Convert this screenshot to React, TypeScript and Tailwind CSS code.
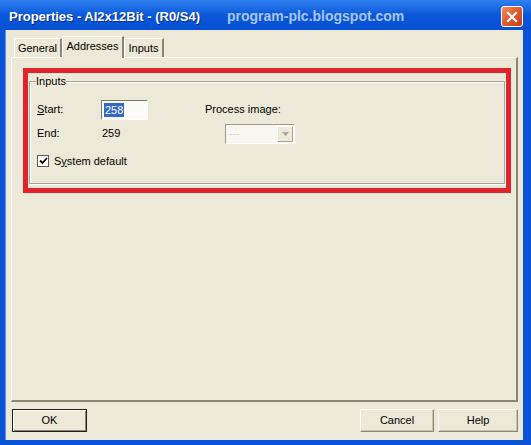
import React from 'react';

const ui = "font-['Liberation_Sans',Arial,sans-serif] text-[11px] text-black";

const Tab: React.FC<{ label: string; active?: boolean; w: string }> = ({ label, active, w }) => (
  <div
    className={
      active
        ? `${w} h-[22px] -mb-[1px] relative z-10 bg-[#ECE9D8] border-l border-t border-white border-r-2 border-r-[#8A8778] flex items-center justify-center pb-[3px]`
        : `${w} h-[19px] bg-[#ECE9D8] border-l border-t border-white border-r-2 border-r-[#8A8778] flex items-center justify-center pt-[1px]`
    }
  >
    {label}
  </div>
);

const Button: React.FC<{ label: string; def?: boolean; className?: string }> = ({ label, def, className }) => (
  <div
    className={`${className ?? ''} h-[23px] flex items-center justify-center ${
      def
        ? 'border border-[#1f1f1f] shadow-[inset_1px_1px_0_#fff,inset_-1px_-1px_0_#8A8778]'
        : 'border border-t-white border-l-white border-r-[#8A8778] border-b-[#8A8778] shadow-[inset_-1px_-1px_0_#C9C6B6]'
    } bg-[#ECE9D8]`}
  >
    {label}
  </div>
);

export default function App() {
  return (
    <div className={`${ui} w-[531px] h-[445px] flex flex-col bg-[#0A52D6]`}>
      {/* title bar */}
      <div className="h-[30px] flex items-center pl-[9px] pr-[8px] pt-[3px] bg-gradient-to-b from-[#2F80F0] via-[#0A58DA] to-[#0550D2]">
        <span className="text-[13px] font-bold text-white [text-shadow:1px_1px_0_#0a2f8a]">Properties - AI2x12Bit - (R0/S4)</span>
        <span className="ml-[27px] text-[14px] font-bold text-[#A9C6F2]">program-plc.blogspot.com</span>
        <div className="ml-auto w-[22px] h-[21px] rounded-[3px] border border-white bg-gradient-to-br from-[#F08A5C] via-[#E05A2E] to-[#C43A14] flex items-center justify-center">
          <svg width="12" height="12" viewBox="0 0 12 12">
            <path d="M2 2 L10 10 M10 2 L2 10" stroke="#fff" strokeWidth="2.2" strokeLinecap="square" />
          </svg>
        </div>
      </div>

      {/* client area */}
      <div className="flex-1 ml-[5px] mr-[8px] mb-[5px] bg-[#ECE9D8] flex flex-col px-[5px] border-l border-[#5C8EE8]">
        {/* tabs */}
        <div className="h-[27px] flex items-end pl-[3px]">
          <Tab label="General" w="w-[48px]" />
          <Tab label="Addresses" w="w-[62px]" active />
          <Tab label="Inputs" w="w-[40px]" />
        </div>

        {/* tab page */}
        <div className="h-[345px] border-l border-t border-white border-r-2 border-r-[#8A8778] border-b-2 border-b-[#8A8778] pt-[10px] pl-[11px] pr-[5px]">
          <div className="border-[5px] border-[#E2232B] px-[1px] pb-[4px]">
            <fieldset className="border border-[#A5A296] shadow-[inset_1px_1px_0_#fff,1px_1px_0_#fff] px-[7px] pb-[15px]">
              <legend className="-ml-[1px] px-0">Inputs</legend>
              <div className="flex items-center h-[20px] mt-[10px]">
                <span className="w-[64px]">
                  <span className="underline">S</span>tart:
                </span>
                <div className="w-[47px] h-[20px] bg-[#FBFBF8] border border-t-[#7A786C] border-l-[#7A786C] border-r-white border-b-white flex items-center pl-[2px]">
                  <span className="bg-[#316AC5] text-white px-[1px] leading-[14px]">258</span>
                </div>
                <span className="ml-[57px]">Process image:</span>
              </div>
              <div className="flex items-center h-[20px] mt-[4px]">
                <span className="w-[64px]">End:</span>
                <span className="w-[124px] pl-[1px]">259</span>
                <div className="w-[70px] h-[20px] bg-[#F7F6F1] border border-t-[#9D9A8C] border-l-[#9D9A8C] border-r-white border-b-white flex items-center">
                  <span className="flex-1 pl-[3px] text-[#D8D6CA]">---</span>
                  <div className="w-[16px] h-[16px] mr-[1px] bg-[#ECE9D8] border border-t-white border-l-white border-r-[#A8A596] border-b-[#A8A596] flex items-center justify-center">
                    <svg width="7" height="4" viewBox="0 0 7 4">
                      <path d="M0 0 H7 L3.5 4 Z" fill="#ACA899" />
                    </svg>
                  </div>
                </div>
              </div>
              <div className="flex items-center h-[13px] mt-[11px]">
                <div className="w-[12px] h-[12px] bg-white border border-[#5A5A52] flex items-center justify-center">
                  <svg width="9" height="8" viewBox="0 0 9 8">
                    <path d="M1 3.5 L3.5 6 L8 1" stroke="#000" strokeWidth="1.8" fill="none" />
                  </svg>
                </div>
                <span className="ml-[5px]">
                  S<span className="underline">y</span>stem default
                </span>
              </div>
            </fieldset>
          </div>
        </div>

        {/* buttons */}
        <div className="flex-1 flex items-center pb-[1px]">
          <Button label="OK" def className="w-[75px] ml-[1px]" />
          <Button label="Cancel" className="w-[74px] ml-auto" />
          <Button label="Help" className="w-[80px] ml-[4px]" />
        </div>
      </div>
    </div>
  );
}
